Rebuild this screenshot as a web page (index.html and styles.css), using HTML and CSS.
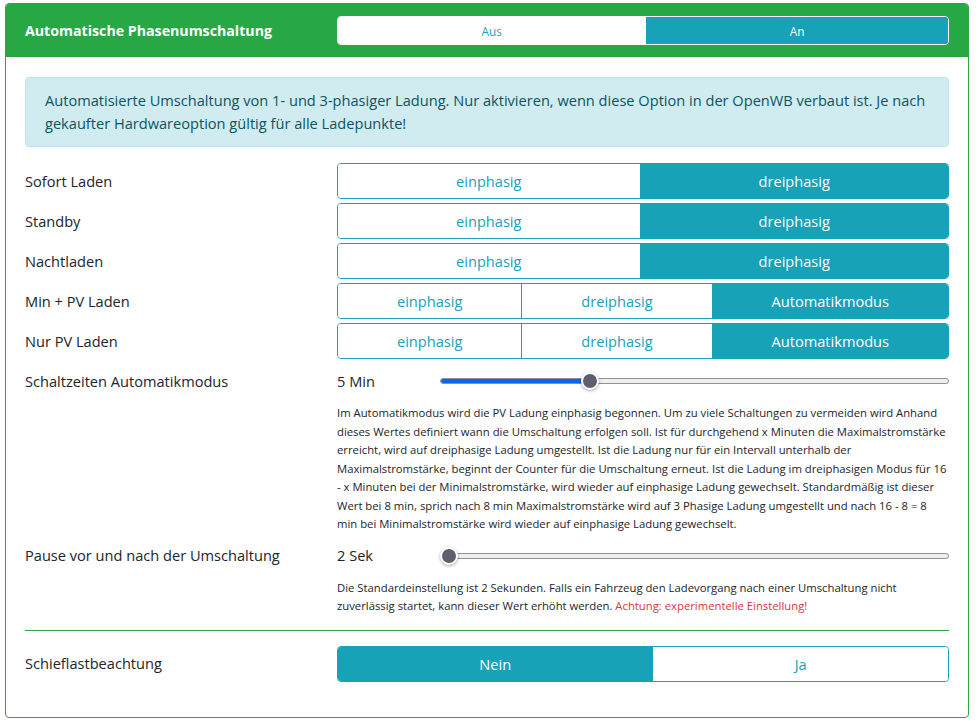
FILE: index.html
```html
<!DOCTYPE html>
<html lang="de">
<head>
<meta charset="UTF-8" />
<meta name="viewport" content="width=device-width, initial-scale=1" />
<title>Automatische Phasenumschaltung</title>
<link rel="stylesheet" href="styles.css">
</head>
<body>

<div class="card">
  <div class="card-header">
    <div class="header-title">Automatische Phasenumschaltung</div>
    <div class="btn-group btn-group-sm header-toggle">
      <button class="btn">Aus</button>
      <button class="btn active">An</button>
    </div>
  </div>

  <div class="card-body">
    <div class="alert">
      Automatisierte Umschaltung von 1- und 3-phasiger Ladung. Nur aktivieren, wenn diese Option in der OpenWB verbaut ist. Je nach gekaufter Hardwareoption gültig für alle Ladepunkte!
    </div>

    <div class="setting">
      <label>Sofort Laden</label>
      <div class="btn-group">
        <button class="btn">einphasig</button>
        <button class="btn active">dreiphasig</button>
      </div>
    </div>
    <div class="setting">
      <label>Standby</label>
      <div class="btn-group">
        <button class="btn">einphasig</button>
        <button class="btn active">dreiphasig</button>
      </div>
    </div>
    <div class="setting">
      <label>Nachtladen</label>
      <div class="btn-group">
        <button class="btn">einphasig</button>
        <button class="btn active">dreiphasig</button>
      </div>
    </div>
    <div class="setting">
      <label>Min + PV Laden</label>
      <div class="btn-group">
        <button class="btn">einphasig</button>
        <button class="btn">dreiphasig</button>
        <button class="btn active">Automatikmodus</button>
      </div>
    </div>
    <div class="setting">
      <label>Nur PV Laden</label>
      <div class="btn-group">
        <button class="btn">einphasig</button>
        <button class="btn">dreiphasig</button>
        <button class="btn active">Automatikmodus</button>
      </div>
    </div>

    <div class="setting setting-range">
      <label>Schaltzeiten Automatikmodus</label>
      <div class="range-line">
        <span class="range-value">5 Min</span>
        <div class="range" style="--p: 0.287">
          <div class="range-track"><div class="range-fill"></div></div>
          <div class="range-thumb"></div>
        </div>
      </div>
    </div>
    <div class="setting-help">
      Im Automatikmodus wird die PV Ladung einphasig begonnen. Um zu viele Schaltungen zu vermeiden wird Anhand<br>
      dieses Wertes definiert wann die Umschaltung erfolgen soll. Ist für durchgehend x Minuten die Maximalstromstärke<br>
      erreicht, wird auf dreiphasige Ladung umgestellt. Ist die Ladung nur für ein Intervall unterhalb der<br>
      Maximalstromstärke, beginnt der Counter für die Umschaltung erneut. Ist die Ladung im dreiphasigen Modus für 16<br>
      - x Minuten bei der Minimalstromstärke, wird wieder auf einphasige Ladung gewechselt. Standardmäßig ist dieser<br>
      Wert bei 8 min, sprich nach 8 min Maximalstromstärke wird auf 3 Phasige Ladung umgestellt und nach 16 - 8 = 8<br>
      min bei Minimalstromstärke wird wieder auf einphasige Ladung gewechselt.
    </div>

    <div class="setting setting-range">
      <label>Pause vor und nach der Umschaltung</label>
      <div class="range-line">
        <span class="range-value">2 Sek</span>
        <div class="range" style="--p: 0">
          <div class="range-track"><div class="range-fill"></div></div>
          <div class="range-thumb"></div>
        </div>
      </div>
    </div>
    <div class="setting-help">
      Die Standardeinstellung ist 2 Sekunden. Falls ein Fahrzeug den Ladevorgang nach einer Umschaltung nicht<br>
      zuverlässig startet, kann dieser Wert erhöht werden. <span class="text-danger">Achtung: experimentelle Einstellung!</span>
    </div>

    <hr class="divider">

    <div class="setting">
      <label>Schieflastbeachtung</label>
      <div class="btn-group">
        <button class="btn active">Nein</button>
        <button class="btn">Ja</button>
      </div>
    </div>
  </div>
</div>

</body>
</html>
```
FILE: styles.css
```css
body {
  margin: 0;
  padding: 3px 10px 0 5px;
  font-family: "Open Sans", "Noto Sans", sans-serif;
  font-size: 14.6px;
  line-height: 23px;
  color: #212529;
  background: #fff;
}

.card {
  border: 1px solid #28a745;
  border-radius: 4px;
  background: #fff;
}
.card-header {
  display: grid;
  grid-template-columns: 312px 1fr;
  align-items: center;
  background: #28a745;
  padding: 12px 19px 11px;
  border-bottom: 1px solid #25a041;
  border-radius: 3px 3px 0 0;
}
.header-title {
  color: #fff;
  font-weight: 700;
  font-size: 14.2px;
}
.card-body {
  padding: 20px 19px 31px;
}

.alert {
  background: #d1ecf1;
  border: 1px solid #bee5eb;
  color: #0c5460;
  border-radius: 4px;
  padding: 11px 19px;
  margin-bottom: 16px;
}

.setting {
  display: grid;
  grid-template-columns: 312px 1fr;
  align-items: center;
  margin-bottom: 4px;
}
.setting label {
  display: block;
}

.btn-group {
  display: flex;
  border: 1px solid #17a2b8;
  border-radius: 4px;
  overflow: hidden;
  height: 36px;
  box-sizing: border-box;
}
.btn {
  flex: 1 1 auto;
  border: none;
  border-left: 1px solid #17a2b8;
  background: #fff;
  color: #17a2b8;
  font-family: inherit;
  font-size: 14.6px;
  padding: 0 12px;
  margin: 0;
  cursor: pointer;
}
.btn:first-child { border-left: none; }
.btn.active {
  background: #17a2b8;
  color: #fff;
}

.header-toggle {
  height: 29px;
  border-color: #fff;
}
.header-toggle .btn {
  font-size: 11.8px;
  border-left-color: #fff;
}

.setting-range {
  height: 36px;
  margin-bottom: 5px;
}
.range-line {
  display: flex;
  align-items: center;
}
.range-value {
  width: 103px;
  flex: none;
}
.range {
  position: relative;
  flex: 1;
  height: 16px;
}
.range-track {
  position: absolute;
  left: 0;
  right: 0;
  top: 5px;
  height: 6px;
  background: #efeff0;
  border: 1px solid #8f8f9d;
  border-radius: 3px;
  box-sizing: border-box;
  overflow: hidden;
}
.range-fill {
  height: 6px;
  width: calc((100% - 16px) * var(--p) + 8px);
  background: #0a66f0;
  margin: -1px 0 0 -1px;
}
.range-thumb {
  position: absolute;
  top: -1px;
  left: calc((100% - 18px) * var(--p));
  width: 14px;
  height: 14px;
  border-radius: 50%;
  background: #5e5e6e;
  border: 2px solid #fff;
  box-shadow: 0 1px 3px rgba(0, 0, 0, 0.35);
}

.setting-help {
  margin-left: 312px;
  font-size: 11.3px;
  line-height: 18.5px;
  margin-bottom: 4px;
  white-space: nowrap;
}
.text-danger { color: #dc3545; }

.divider {
  border: none;
  border-top: 1px solid #28a745;
  margin: 14px 0 15px;
}
```
